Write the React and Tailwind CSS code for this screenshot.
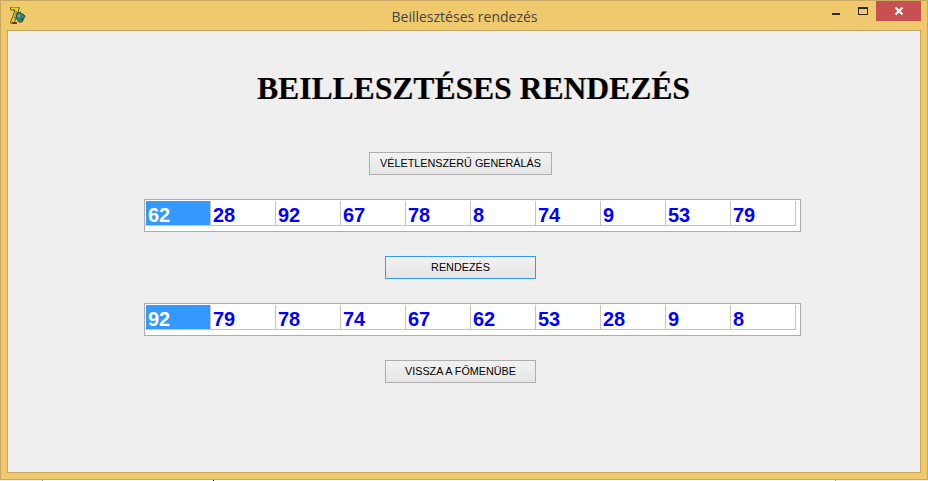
const first = [62, 28, 92, 67, 78, 8, 74, 9, 53, 79];
const second = [92, 79, 78, 74, 67, 62, 53, 28, 9, 8];

function AppIcon() {
  return (
    <svg width="18" height="18" viewBox="0 0 18 18" className="shrink-0">
      <path d="M0 0h9v2l-3 9-2 5H0l3-7 2-6H1z" fill="#e6d628" stroke="#5c5a26" strokeWidth="1" />
      <path d="M3 3.5h2" stroke="#5c5a26" strokeWidth="1" />
      <path d="M6.5 4L4 12" stroke="#8a8640" strokeWidth="1" />
      <path d="M7 6l4-1 4 4-3 6-3 0-3-4z" fill="#2f8a5a" stroke="#1c4a78" strokeWidth="1" />
      <circle cx="8.8" cy="8.8" r="1.4" fill="#a09a78" />
      <path d="M11 11h2v2h-2z" fill="#1c4f96" />
      <path d="M12 6l3-6" stroke="#f6ea10" strokeWidth="2.4" strokeDasharray="2 1" />
      <path d="M2 15h5v2H2z" fill="#8a2f14" />
    </svg>
  );
}

function NumberList({ items }) {
  return (
    <div className="ml-[136px] w-[657px] h-[33px] border border-[#adadad] bg-white pl-px pt-px">
      <div className="flex w-[650px] h-[25px] border-b border-[#c4c4c4]">
        {items.map((n, i) => (
          <div
            key={i}
            className={`w-[65px] h-[24px] shrink-0 border-r border-[#c4c4c4] pl-[2px] text-[20px] leading-[28px] font-bold ${i === 0 ? "bg-[#3399ff] text-white" : "text-[#0000ff]"}`}
          >
            {n}
          </div>
        ))}
      </div>
    </div>
  );
}

function Btn({ label, className }) {
  return (
    <button className={`h-[23px] border bg-gradient-to-b from-[#f2f2f2] to-[#e5e5e5] text-[10.8px] text-black ${className}`}>
      {label}
    </button>
  );
}

export default function App() {
  return (
    <div className="w-[928px] h-[481px] bg-white font-['Liberation_Sans',sans-serif] overflow-hidden">
      <div className="w-[928px] h-[480px] flex flex-col bg-[#f0c96d] border border-[#c8a862]">
        {/* title bar */}
        <div className="h-[29px] flex shrink-0">
          <div className="pl-[9px] pt-[6px]"><AppIcon /></div>
          <div className="flex-1 text-center pt-[6px] pl-[75px] text-[14px] leading-[19px] text-[#444444] font-['Open_Sans',sans-serif]">
            Beillesztéses rendezés
          </div>
          <div className="w-[20px] flex justify-center pt-[12px] mr-[7px]"><div className="w-[8px] h-[2px] bg-[#2a2a2a]" /></div>
          <div className="w-[20px] flex justify-center pt-[6px] mr-[3px]"><div className="w-[10px] h-[8px] border border-t-2 border-[#2a2a2a]" /></div>
          <div className="w-[45px] h-[20px] bg-[#c75050] flex items-center justify-center mr-[6px]">
            <svg width="10" height="10" viewBox="0 0 10 10"><path d="M1.5 1.5l7 7M8.5 1.5l-7 7" stroke="white" strokeWidth="2" /></svg>
          </div>
        </div>
        {/* client area */}
        <div className="mx-[6px] h-[443px] border border-[#c8a862] bg-[#efefef] flex flex-col items-start">
          <h1 className="mt-[39px] ml-[249px] text-[31.6px] leading-[37px] font-bold text-black font-['Liberation_Serif',serif] [text-shadow:1px_0_0_rgba(160,110,40,0.35)] whitespace-nowrap">
            BEILLESZTÉSES RENDEZÉS
          </h1>
          <Btn label="VÉLETLENSZERŰ GENERÁLÁS" className="mt-[45px] ml-[361px] w-[183px] border-[#adadad]" />
          <div className="mt-[24px]"><NumberList items={first} /></div>
          <Btn label="RENDEZÉS" className="mt-[24px] ml-[377px] w-[151px] border-[#3399ff]" />
          <div className="mt-[24px]"><NumberList items={second} /></div>
          <Btn label="VISSZA A FŐMENÜBE" className="mt-[24px] ml-[377px] w-[151px] border-[#adadad]" />
        </div>
      </div>
      {/* sliver of whatever sits behind the window */}
      <div className="flex h-px">
        <div className="w-[43px] bg-[#f0f0f0] border-r border-[#a0a0a0]" />
        <div className="w-[170px]" />
        <div className="w-px bg-black" />
        <div className="w-[621px]" />
        <div className="flex-1 bg-[#f0f0f0] border-l border-[#a0a0a0]" />
      </div>
    </div>
  );
}
